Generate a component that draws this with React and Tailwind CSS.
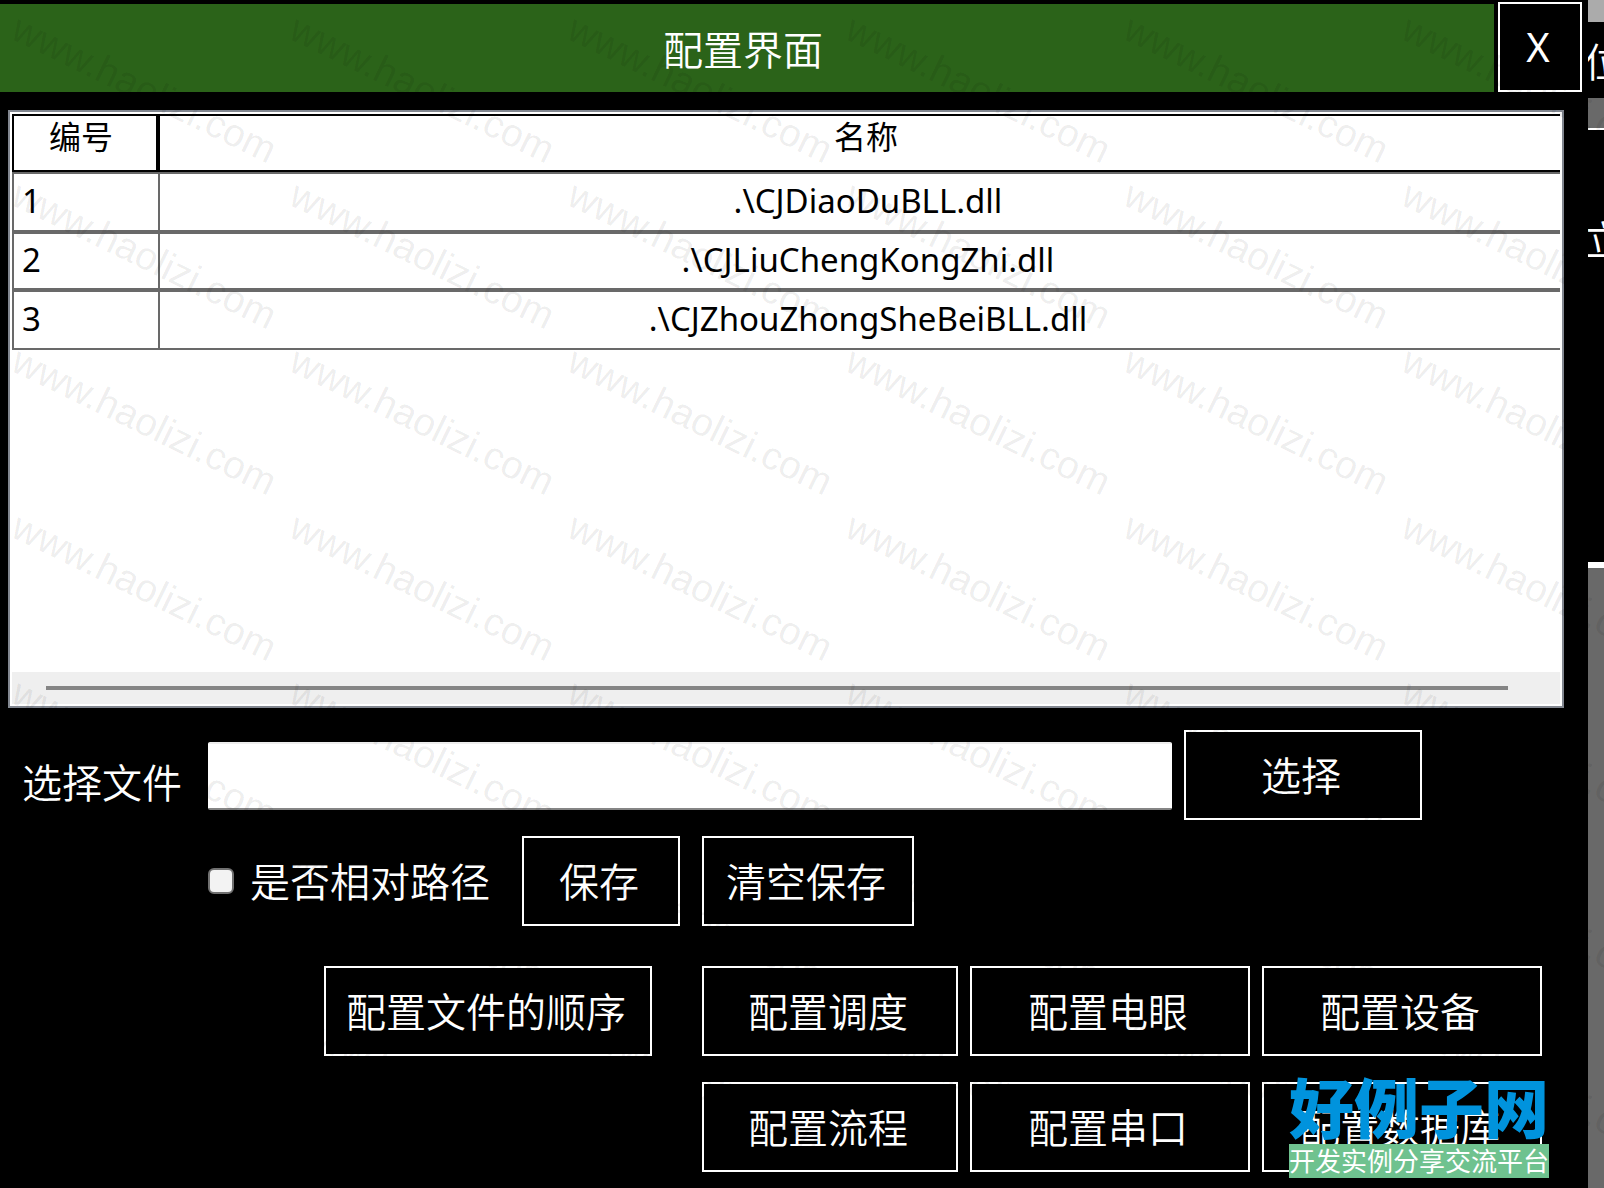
import { useState } from 'react';
import clsx from 'clsx';

const files = [
  { id: 1, name: '.\\CJDiaoDuBLL.dll' },
  { id: 2, name: '.\\CJLiuChengKongZhi.dll' },
  { id: 3, name: '.\\CJZhouZhongSheBeiBLL.dll' },
];

const configButtons = ['配置调度', '配置电眼', '配置设备', '配置流程', '配置串口', '配置数据库'];

const BoxButton = ({ className, children, ...props }) => (
  <button
    type="button"
    className={clsx(
      'h-[90px] shrink-0 border-2 border-white bg-black pr-1 text-center text-[40px] leading-none whitespace-nowrap text-white',
      className
    )}
    {...props}
  >
    {children}
  </button>
);

const FileTable = () => (
  <div className="flex flex-1 flex-col border-2 border-[#828790] bg-white p-[2px]">
    <div className="flex-1 overflow-hidden">
      <table className="w-full table-fixed border-separate border-spacing-0 leading-10 text-black">
        <thead className="text-[32px]">
          <tr className="h-[58px]">
            <th className="w-[146px] border-2 border-black pr-2 pb-3 font-normal">编号</th>
            <th className="border-y-2 border-l-2 border-black pb-3 pl-3 font-normal">名称</th>
          </tr>
        </thead>
        <tbody className="text-[33px]">
          {files.map((file) => (
            <tr key={file.id} className="h-[60px] even:h-[58px]">
              <td className="border-y-2 border-l-2 border-[#696969] pb-[2px] pl-2">{file.id}</td>
              <td className="border-y-2 border-l-2 border-[#696969] pb-[2px] pl-4 text-center">{file.name}</td>
            </tr>
          ))}
        </tbody>
      </table>
    </div>
    {/* horizontal scrollbar */}
    <div className="flex h-8 items-center bg-[#efefef] pr-[52px] pl-[34px]">
      <div className="h-1 w-full bg-[#858585]" />
    </div>
  </div>
);

// the window behind, only its left edge shows
const BackWindow = () => (
  <aside className="flex w-4 shrink-0 flex-col overflow-hidden text-[40px] leading-10 whitespace-nowrap">
    <div className="h-[22px] bg-[#ababab]" />
    <div className="-ml-1 flex h-[76px] items-center pt-1">位</div>
    <div className="h-8 border-b-2 border-white bg-[#696969]" />
    <div className="-ml-1 h-[432px] pt-[90px]">立</div>
    <div className="flex-1 border-t-[6px] border-white bg-[#696969]" />
  </aside>
);

const Watermark = () => (
  <div
    aria-hidden="true"
    className="pointer-events-none absolute inset-0 grid auto-rows-[166px] grid-cols-[repeat(6,278px)] overflow-hidden font-['Liberation_Sans',sans-serif] text-[39px] leading-10 font-normal text-black/[0.08]"
  >
    {Array.from({ length: 48 }, (_, i) => (
      <div key={i} className="pt-1 pl-1.5">
        <span className="block origin-bottom-left rotate-26 whitespace-nowrap">www.haolizi.com</span>
      </div>
    ))}
  </div>
);

const SiteLogo = () => (
  <div className="absolute right-[55px] bottom-[10px] text-center whitespace-nowrap">
    <div className="text-[65px] leading-[72px] font-black text-[#0093dd]">好例子网</div>
    <div className="bg-[#6fc28f] text-[26px] leading-[34px] font-normal text-white">开发实例分享交流平台</div>
  </div>
);

const App = () => {
  const [path, setPath] = useState('');
  const [relative, setRelative] = useState(false);

  return (
    <div className="relative flex min-h-screen overflow-hidden bg-black font-['Noto_Sans','Noto_Sans_CJK_SC',sans-serif] font-[350] text-white">
      <main className="flex min-w-0 flex-1 flex-col pb-4">
        <header className="flex gap-1 pt-[2px] pr-[6px]">
          <h1 className="mt-[2px] flex flex-1 items-center justify-center bg-[#2b6319] pt-1 pr-2 text-[40px] leading-none font-[350]">
            配置界面
          </h1>
          <BoxButton className="w-[84px] font-normal">X</BoxButton>
        </header>

        <section className="mt-[18px] mr-6 ml-2 flex flex-1 flex-col font-normal">
          <FileTable />
        </section>

        <div className="mt-[22px] flex items-center pr-[166px] pl-[22px]">
          <label htmlFor="path" className="w-[186px] shrink-0 pt-4 text-[40px] leading-10">
            选择文件
          </label>
          <input
            id="path"
            type="text"
            value={path}
            onChange={(e) => setPath(e.target.value)}
            className="mt-[2px] mr-3 h-[68px] min-w-0 flex-1 rounded-xs border-t-2 border-b-2 border-t-[#ededed] border-b-[#858585] bg-white px-2 text-[32px] text-black"
          />
          <BoxButton className="w-[238px] pt-[2px]">选择</BoxButton>
        </div>

        <div className="mt-4 flex items-center pl-[208px]">
          <input
            id="relative"
            type="checkbox"
            checked={relative}
            onChange={(e) => setRelative(e.target.checked)}
            className="size-[26px] appearance-none rounded-md border-2 border-[#707070] bg-[#f3f3f3] checked:bg-[#0067c0]"
          />
          <label htmlFor="relative" className="w-[288px] pt-[2px] pl-4 text-[40px] leading-10">
            是否相对路径
          </label>
          <BoxButton className="w-[158px] pt-[2px]">保存</BoxButton>
          <BoxButton className="ml-[22px] w-[212px] pt-[2px]">清空保存</BoxButton>
        </div>

        <div className="mt-10 flex items-start pl-[324px]">
          <BoxButton className="w-[328px] pt-[2px]">配置文件的顺序</BoxButton>
          <div className="ml-[50px] grid grid-cols-[256px_280px_280px] gap-x-3 gap-y-[26px]">
            {configButtons.map((text) => (
              <BoxButton key={text} className="pt-[2px]">
                {text}
              </BoxButton>
            ))}
          </div>
        </div>
      </main>

      <BackWindow />
      <Watermark />
      <SiteLogo />
    </div>
  );
};

export default App;
